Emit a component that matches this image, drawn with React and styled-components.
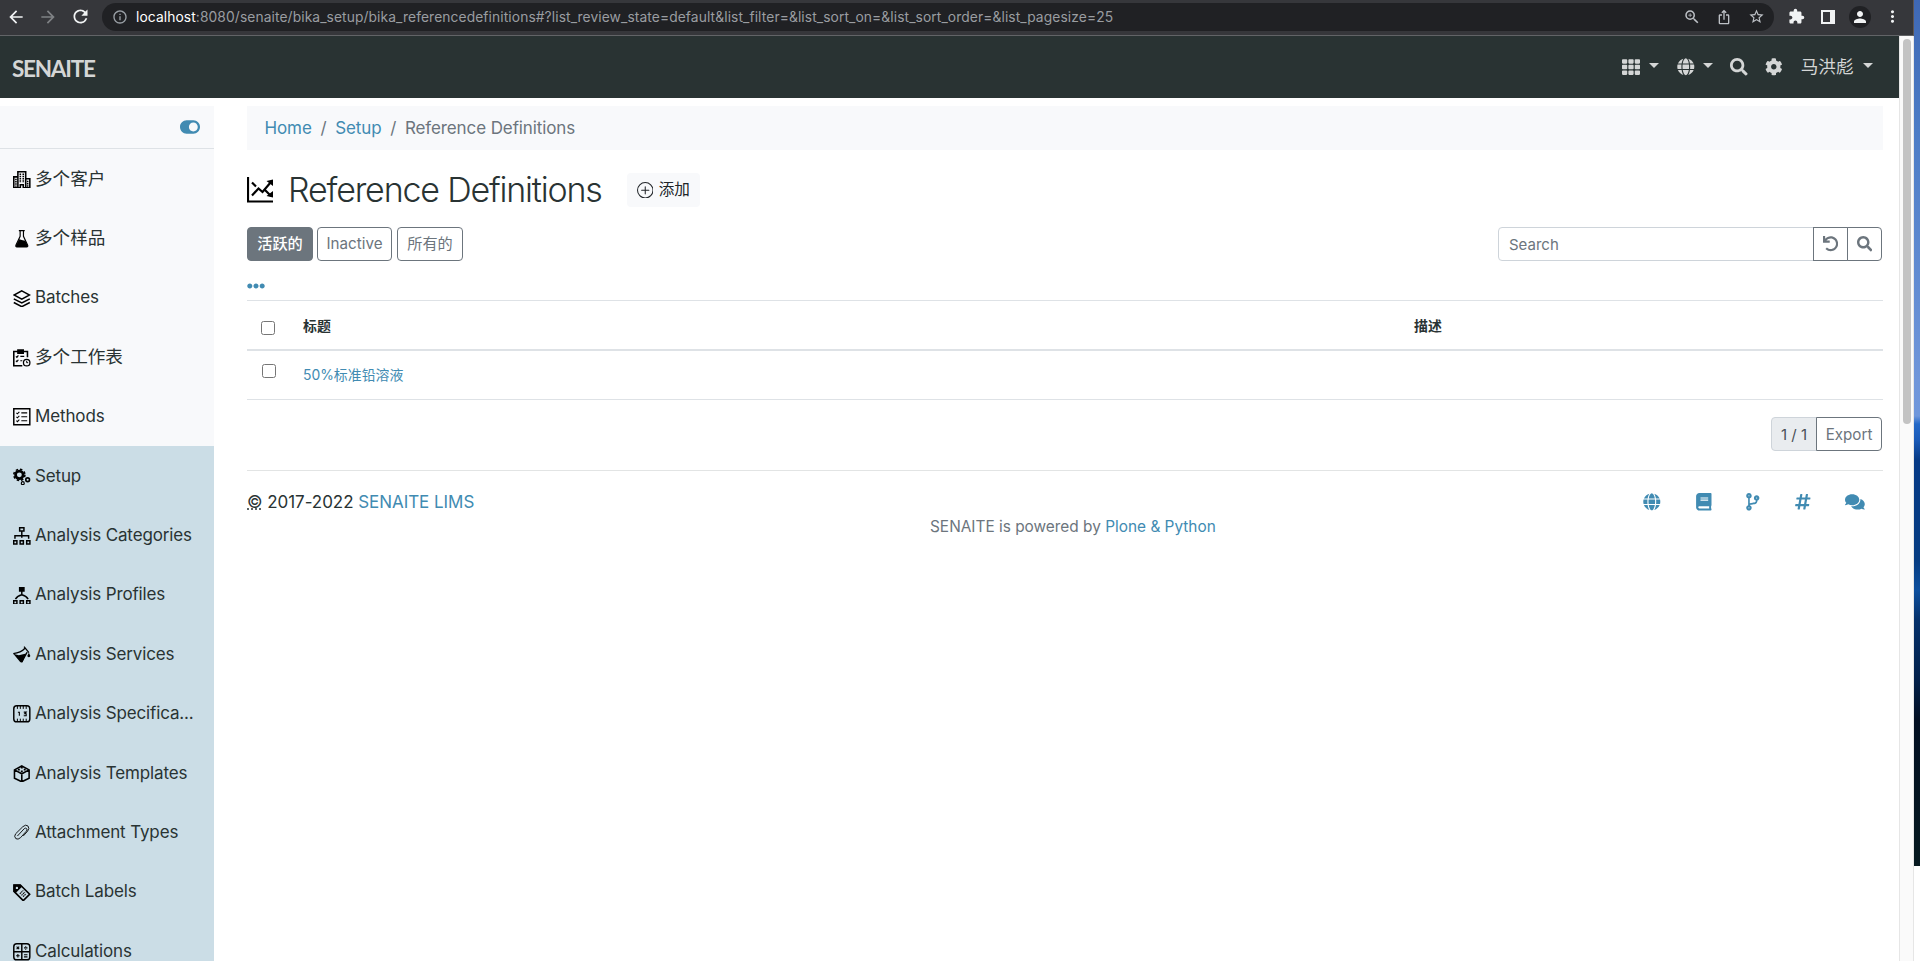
import React from 'react';
import styled, { createGlobalStyle } from 'styled-components';
import {
  FaTh, FaGlobe, FaSearch, FaCog, FaToggleOn, FaUndo, FaBook,
  FaCodeBranch, FaHashtag, FaComments, FaEllipsisH,
} from 'react-icons/fa';
import {
  MdArrowBack, MdArrowForward, MdRefresh, MdInfoOutline, MdZoomIn, MdIosShare,
  MdStarBorder, MdExtension, MdPerson, MdMoreVert,
} from 'react-icons/md';
import { BsPlusCircle } from 'react-icons/bs';

const GlobalStyle = createGlobalStyle`
  * {
    box-sizing: border-box;
  }

  body {
    margin: 0;
    overflow: hidden;
    background: #fff;
    color: #293333;
    font-family: Inter, "Noto Sans CJK SC", sans-serif;
    font-size: 17px;
    line-height: 26px;
  }

  svg {
    display: block;
    flex: none;
  }
`;

const Desktop = styled.div`
  display: flex;
  width: 1920px;
  height: 961px;
  overflow: hidden;
`;

const Wallpaper = styled.div`
  width: 6px;
  height: 866px;
  background: linear-gradient(
    #3f68b4 0, #4c7cc6 130px, #7096da 380px, #6f97dc 416px, #2469c8 424px,
    #1a5ab8 440px, #063a86 460px, #063c82 560px, #0d4f9e 590px, #05316b 620px,
    #02204a 680px, #020f22 720px, #071a20 866px
  );
`;

const Browser = styled.div`
  display: flex;
  flex-direction: column;
  width: 1914px;
  border-right: 1px solid #e6e6e6;
`;

const BrowserBar = styled.div`
  display: flex;
  align-items: center;
  flex: none;
  width: 1914px;
  height: 36px;
  padding: 0 5px 2px 7px;
  color: #f1f3f4;
  background: #36373b;
  border-bottom: 1px solid #626467;
  border-right: 1px solid #5d5653;
`;

const BarIcon = styled.div`
  display: flex;
  align-items: center;
  justify-content: center;
  flex: none;
  width: ${(props) => props.$width || 32}px;
  color: ${(props) => props.$color || 'inherit'};
`;

const AddressBar = styled.div`
  display: flex;
  align-items: center;
  flex: 1;
  height: 28px;
  margin: 0 6px 0 6px;
  padding: 0 2px 0 10px;
  border-radius: 14px;
  background: #202124;
`;

const Address = styled.div`
  flex: 1;
  padding-left: 8px;
  font-size: 13.8px;
  line-height: 20px;
  letter-spacing: 0.1px;
  white-space: nowrap;
  color: #9a9da1;

  b {
    font-weight: 400;
    color: #fff;
  }
`;

const Profile = styled.div`
  display: flex;
  align-items: center;
  justify-content: center;
  width: 22px;
  height: 22px;
  border-radius: 50%;
  background: #202124;
`;

const Viewport = styled.div`
  display: flex;
  flex: 1;
  min-height: 0;
`;

const Page = styled.div`
  width: 1899px;
`;

const Scrollbar = styled.div`
  width: 14px;
  padding: 3px 2px 0 3px;
  background: #fafafa;
  border-left: 1px solid #e6e6e6;
`;

const Thumb = styled.div`
  width: 8px;
  height: 385px;
  border-radius: 4px;
  background: #c3c3c3;
`;

const Navbar = styled.header`
  display: flex;
  align-items: center;
  height: 62px;
  padding: 0 25px 0 12px;
  background: #293333;
  color: #d4d6d6;
`;

const Logo = styled.div`
  margin-right: auto;
  padding-top: 4px;
  font-family: Lato, sans-serif;
  font-weight: 700;
  font-size: 22.5px;
  letter-spacing: -1.25px;
`;

const NavItem = styled.div`
  display: flex;
  align-items: center;
  margin-left: ${(props) => props.$gap}px;
  font-size: 17.6px;
`;

const Caret = styled.span`
  margin: 0 1px 3px ${(props) => props.$gap || 8.5}px;
  border: 5.5px solid transparent;
  border-top-color: currentColor;
  border-bottom: 0;
`;

const Body = styled.div`
  display: flex;
  height: 863px;
  padding-top: 8px;
`;

const Sidebar = styled.nav`
  flex: none;
  width: 214px;
  overflow: hidden;
  background: #f8f9fb;
`;

const SidebarToggle = styled.div`
  display: flex;
  justify-content: flex-end;
  height: 43px;
  padding: 10.5px 14px 0 0;
  border-bottom: 1px solid #dee2e6;
  color: #418bb2;
`;

const SidebarItem = styled.div`
  display: flex;
  align-items: center;
  height: 59.4px;
  padding-left: 13px;
  background: ${(props) => (props.$active ? '#cbdde6' : 'transparent')};

  svg {
    margin: 2px 4.4px 0 0;
  }
`;

const SidebarLabel = styled.span`
  font-size: ${(props) => (props.$cjk ? 17.6 : 17)}px;
  letter-spacing: ${(props) => (props.$cjk ? '0' : '-0.008em')};
  white-space: nowrap;
`;

const Content = styled.main`
  width: 1636px;
  margin-left: 33px;
`;

const Breadcrumb = styled.div`
  display: flex;
  height: 44px;
  padding: 9px 17.5px;
  color: #6c757d;
  background: #f8f9fb;
  letter-spacing: -0.006em;
  white-space: pre;
`;

const Link = styled.span`
  color: #418bb2;
`;

const Slash = styled.span`
  padding: 0 8.7px;
`;

const TitleRow = styled.div`
  display: flex;
  align-items: center;
  height: 42px;
  margin-top: 19px;
`;

const Title = styled.h1`
  margin: 0 25px 0 15px;
  font-size: 34px;
  font-weight: 300;
  line-height: 42px;
  letter-spacing: -0.035em;
  white-space: nowrap;
`;

const AddButton = styled.div`
  display: flex;
  align-items: center;
  gap: 5.5px;
  height: 34px;
  padding: 0 10px;
  border-radius: 4px;
  background: #f8f9fb;
  color: #212529;
  font-size: 15.6px;
`;

const Toolbar = styled.div`
  display: flex;
  margin-top: 16px;
  padding-right: 1px;
  height: 34px;
`;

const Button = styled.div`
  display: flex;
  align-items: center;
  justify-content: center;
  width: ${(props) => props.$width}px;
  height: 34px;
  margin-right: ${(props) => props.$gap || 0}px;
  margin-left: ${(props) => (props.$joined ? -1 : 0)}px;
  padding-top: ${(props) => props.$drop || 0}px;
  border: 1px solid #6c757d;
  border-radius: ${(props) => props.$radius || '4px'};
  background: ${(props) => (props.$active ? '#6c757d' : '#fff')};
  color: ${(props) => (props.$active ? '#fff' : '#6c757d')};
  font-size: 15.2px;
  font-weight: ${(props) => (props.$active ? 500 : 400)};
  line-height: 30px;
`;

const SearchInput = styled.input`
  width: 316px;
  height: 34px;
  margin-left: auto;
  padding: 0 10px;
  border: 1px solid #ced4da;
  border-radius: 4px 0 0 4px;
  font: 400 15px Inter, sans-serif;
  outline: none;

  &::placeholder {
    color: #6c757d;
  }
`;

const ColumnToggle = styled.div`
  height: 39px;
  padding-top: 16px;
  color: #418bb2;
`;

const Table = styled.table`
  width: 100%;
  table-layout: fixed;
  border-collapse: collapse;
  font-size: 13.9px;
  line-height: 20px;
`;

const Cell = styled.td`
  height: ${(props) => (props.$head ? 49 : 50)}px;
  padding: ${(props) => (props.$check ? '0 0 0 14px' : props.$head ? '2px 0 0' : '0')};
  border-top: 1px solid #dee2e6;
  border-bottom: ${(props) => (props.$head ? 2 : 1)}px solid #dee2e6;
  text-align: left;
  font-weight: ${(props) => (props.$head ? 700 : 400)};
`;

const Checkbox = styled.input`
  display: block;
  width: 14px;
  height: 14px;
  margin: ${(props) => props.$margin};
`;

const Pager = styled.div`
  display: flex;
  justify-content: flex-end;
  margin-top: 17px;
  padding-right: 1px;
`;

const PageCount = styled.div`
  width: 46px;
  height: 34px;
  border: 1px solid #ced4da;
  border-radius: 4px 0 0 4px;
  background: #e9ecef;
  color: #495057;
  font-size: 15px;
  line-height: 34px;
  text-align: center;
`;

const Footer = styled.footer`
  margin-top: 19px;
  padding-top: 18px;
  border-top: 1px solid #e2e4e4;
`;

const FooterRow = styled.div`
  display: flex;
  align-items: center;
  justify-content: space-between;
`;

const Copyright = styled.div`
  letter-spacing: -0.003em;

  abbr {
    text-decoration: underline dotted;
  }
`;

const FooterIcons = styled.div`
  display: flex;
  align-items: center;
  gap: 35.2px;
  padding-right: 18px;
  color: #418bb2;
`;

const FooterIcon = styled.div`
  display: flex;
  justify-content: center;
  width: ${(props) => props.$width}px;
`;

const Powered = styled.div`
  padding-left: 683px;
  margin-top: -1px;
  font-size: 15.4px;
  color: #6c757d;
`;

const Svg = ({ children }) => (
  <svg width="17.6" height="17.6" viewBox="0 0 18 18" fill="none" stroke="#000" strokeWidth="1.5">
    {children}
  </svg>
);

const icons = {
  clients: (
    <Svg>
      <path d="M.8 17.3V6H5M17.2 17.3V8H13M5 17.3V.8h8v16.500M0 17.200h7.500M10.500 17.200H18M7.500 17.500v-3.500h3v3.500" strokeWidth="1.600" />
      <path d="M7.500 2.500v9.500M10.500 2.500v9.500M3 8v8M15 10v6" strokeWidth="1.600" strokeDasharray="1.500 .8" />
    </Svg>
  ),
  samples: (
    <Svg>
      <path d="M6 .7h6M7.300 1v5.500L3 15.500q-.5 1.800 1 1.800h10q1.500 0 1-1.800L10.700 6.500V1" strokeWidth="1.200" />
      <path d="M6.300 9.500L3 16q0 1.500 1 1.500h10q1.500-.3 1-1.800l-2.500-4.700-2.500-.5z" fill="#000" stroke="none" />
    </Svg>
  ),
  batches: (
    <Svg>
      <path d="M9 .8l8 4.300-8 4.300-8-4.300zM.8 9L9 13.300 17.200 9M.8 12.800L9 17.100l8.200-4.300" />
    </Svg>
  ),
  worksheets: (
    <Svg>
      <path d="M9.500 17.200H.8V2.500h14v6" strokeWidth="1.600" />
      <path d="M5 1h5.500v3.300H5z" fill="#000" />
      <path d="M3 7.500l1 1 1.500-2M7.500 7.500h4M3 12l1 1 1.500-2M7.500 12h2" strokeWidth="1.200" />
      <circle cx="14" cy="14" r="3.300" strokeWidth="1.300" />
      <path d="M14 12v2h1.500" strokeWidth="1" />
    </Svg>
  ),
  methods: (
    <Svg>
      <path d="M.8.8h16.400v16.400H.8z" />
      <path d="M3.500 5l1 1 2-2M3.500 9l1 1 2-2M3.500 13l1 1 2-2M8.500 5h6M8.500 9h6M8.500 13h6" strokeWidth="1.100" />
    </Svg>
  ),
  setup: (
    <Svg>
      <circle cx="6.500" cy="7" r="3.900" strokeWidth="2.800" />
      <circle cx="6.500" cy="7" r="5.700" strokeWidth="1.600" strokeDasharray="2.500 1.976" />
      <circle cx="15" cy="12" r="1.900" strokeWidth="1.700" />
      <circle cx="10" cy="15.500" r="1.500" strokeWidth="1.200" />
    </Svg>
  ),
  categories: (
    <Svg>
      <path d="M6.800.7h4.400v3.400H6.800zM.7 14h3.300v3.300H.7zM7.300 14h3.300v3.300H7.300zM14 14h3.300v3.300H14z" />
      <path d="M9 4v7M2 12V9h14v3" />
    </Svg>
  ),
  profiles: (
    <Svg>
      <path d="M.7 14h3.300v3.300H.7zM7.300 14h3.300v3.300H7.300zM14 14h3.300v3.300H14z" />
      <path d="M6.800.7h4.400v3.400H6.800z" fill="#000" />
      <path d="M9 4v4M2.500 12.300Q4.500 9 9 8q4.500 1 6.500 4.300" />
    </Svg>
  ),
  services: (
    <Svg>
      <path d="M.3 7.700Q8 7 12.300 2.300M9 16.300l5.500-10M11.300.6l5 6.200" strokeWidth="1.300" />
      <path d="M.3 8L6 9.500l7.500-1.700-3.800 8.700q-1.500 1-2.600-.3z" fill="#000" stroke="none" />
      <path d="M16.200 7l-1.600 3.300q1.600 2.500 3.200 0z" fill="#000" stroke="none" />
    </Svg>
  ),
  specs: (
    <Svg>
      <rect x=".8" y=".8" width="16.400" height="16.400" rx="3" />
      <path d="M4.500 1v3M7.500 1v3M10.500 1v3M13.500 1v3M4.500 17v-3M7.500 17v-3M10.500 17v-3M13.500 17v-3" strokeWidth="1" />
      <path d="M5 7.500h1.500V11M11 7.300h2.500L12 9h1.500v2H11" strokeWidth="1.100" />
    </Svg>
  ),
  templates: (
    <Svg>
      <path d="M9 1l7.500 4v8.500L9 17.200l-7.500-3.700V5zM1.500 5L9 9l7.500-4M9 9v8" strokeWidth="1.600" />
      <path d="M5 4.700h2M11 4.700h2M8 2.900h2M8 6.500h2" strokeWidth="1.600" />
    </Svg>
  ),
  attachments: (
    <Svg>
      <path d="M4.500 12.500L11.500 5q1.600-1.200 2.500 0t-.3 2.500l-6 6.700q-2.600 2.400-4.800 1-2.300-2.300-.2-5L10 3q3-2.800 5.300-.8 2 2.500-.3 5.300l-4.500 5" strokeWidth=".9" transform="translate(0 -.2)" />
    </Svg>
  ),
  labels: (
    <Svg>
      <path d="M1 1h6.500l9.500 9.500-6.500 6.500L1 7.500z" strokeWidth="1.700" />
      <path d="M.5.500h7l2 2-7 7-2-2z" fill="#000" stroke="none" />
      <circle cx="4" cy="4" r="1.200" fill="#cbdde6" stroke="none" />
      <path d="M7 10l3.500-3.500M8.700 11.700l3.500-3.500M10.300 13l3-3" strokeWidth="1.100" strokeDasharray="1.500 .6" />
    </Svg>
  ),
  calculations: (
    <Svg>
      <rect x=".8" y=".8" width="16.400" height="16.400" rx="3" />
      <path d="M9 1v16M1 9h16" />
      <path d="M3.700 3.700l2.600 2.600M6.300 3.700L3.700 6.300M11.300 5h3.500M13 3v.9M13 6.100V7M3.200 13h3.600M5 11.200v3.600M11.300 12h3.500M11.300 14.200h3.500" strokeWidth="1.100" />
    </Svg>
  ),
};

const items = [
  { icon: 'clients', label: '多个客户', cjk: true },
  { icon: 'samples', label: '多个样品', cjk: true },
  { icon: 'batches', label: 'Batches' },
  { icon: 'worksheets', label: '多个工作表', cjk: true },
  { icon: 'methods', label: 'Methods' },
  { icon: 'setup', label: 'Setup', active: true },
  { icon: 'categories', label: 'Analysis Categories', active: true },
  { icon: 'profiles', label: 'Analysis Profiles', active: true },
  { icon: 'services', label: 'Analysis Services', active: true },
  { icon: 'specs', label: 'Analysis Specifica...', active: true },
  { icon: 'templates', label: 'Analysis Templates', active: true },
  { icon: 'attachments', label: 'Attachment Types', active: true },
  { icon: 'labels', label: 'Batch Labels', active: true },
  { icon: 'calculations', label: 'Calculations', active: true },
];

const ReferenceIcon = () => (
  <svg width="26" height="26" viewBox="0 0 26 26" fill="none" stroke="#000">
    <path d="M1 0v24.500h25" strokeWidth="2.200" />
    <path d="M5 18.500l6.500-7 4 3.500L24 5M5 5.500l4 4M18 13l6 6" strokeWidth="2.200" />
    <path d="M26 2.500v6.500L19.500 4zM26 20.500v-6.500L19.500 19z" fill="#000" stroke="none" />
  </svg>
);

const App = () => (
  <Desktop>
    <GlobalStyle />
    <Browser>
      <BrowserBar>
        <BarIcon $width={18}><MdArrowBack size={20} /></BarIcon>
        <BarIcon $width={46} $color="#7f8285"><MdArrowForward size={20} /></BarIcon>
        <BarIcon $width={18}><MdRefresh size={21} /></BarIcon>
        <BarIcon $width={7} />
        <AddressBar>
          <MdInfoOutline size={16} color="#9aa0a6" />
          <Address>
            <b>localhost</b>:8080/senaite/bika_setup/bika_referencedefinitions#?list_review_state=default&amp;list_filter=&amp;list_sort_on=&amp;list_sort_order=&amp;list_pagesize=25
          </Address>
          <BarIcon $color="#bdc1c6"><MdZoomIn size={18} /></BarIcon>
          <BarIcon $color="#bdc1c6"><MdIosShare size={16} /></BarIcon>
          <BarIcon $color="#bdc1c6"><MdStarBorder size={17} /></BarIcon>
        </AddressBar>
        <BarIcon><MdExtension size={17} /></BarIcon>
        <BarIcon>
          <svg width="14" height="14" viewBox="0 0 14 14">
            <path fill="currentColor" d="M0 0h14v14H0zM2 2v10h7V2z" fillRule="evenodd" />
          </svg>
        </BarIcon>
        <BarIcon><Profile><MdPerson size={18} /></Profile></BarIcon>
        <BarIcon><MdMoreVert size={19} /></BarIcon>
      </BrowserBar>
      <Viewport>
        <Page>
          <Navbar>
            <Logo>SENAITE</Logo>
            <NavItem><FaTh size={18} /><Caret /></NavItem>
            <NavItem $gap={17}><FaGlobe size={17.6} /><Caret /></NavItem>
            <NavItem $gap={16}><FaSearch size={17.6} /></NavItem>
            <NavItem $gap={17.5}><FaCog size={17.6} /></NavItem>
            <NavItem $gap={18}>马洪彪<Caret $gap={9.5} /></NavItem>
          </Navbar>
          <Body>
            <Sidebar>
              <SidebarToggle><FaToggleOn size={20} /></SidebarToggle>
              {items.map((item) => (
                <SidebarItem key={item.label} $active={item.active}>
                  {icons[item.icon]}
                  <SidebarLabel $cjk={item.cjk}>{item.label}</SidebarLabel>
                </SidebarItem>
              ))}
            </Sidebar>
            <Content>
              <Breadcrumb>
                <Link>Home</Link>
                <Slash>/</Slash>
                <Link>Setup</Link>
                <Slash>/</Slash>
                <span>Reference Definitions</span>
              </Breadcrumb>
              <TitleRow>
                <ReferenceIcon />
                <Title>Reference Definitions</Title>
                <AddButton><BsPlusCircle size={16.5} />添加</AddButton>
              </TitleRow>
              <Toolbar>
                <Button $width={66} $gap={4} $active>活跃的</Button>
                <Button $width={75} $gap={5}>Inactive</Button>
                <Button $width={66}>所有的</Button>
                <SearchInput placeholder="Search" />
                <Button $width={35} $radius="0" $joined><FaUndo size={15.4} /></Button>
                <Button $width={35} $radius="0 4px 4px 0" $joined><FaSearch size={15.4} /></Button>
              </Toolbar>
              <ColumnToggle><FaEllipsisH size={18} /></ColumnToggle>
              <Table>
                <colgroup>
                  <col style={{ width: 56 }} />
                  <col style={{ width: 1111 }} />
                  <col />
                </colgroup>
                <thead>
                  <tr>
                    <Cell as="th" $head $check><Checkbox type="checkbox" $margin="7px 0 0" /></Cell>
                    <Cell as="th" $head>标题</Cell>
                    <Cell as="th" $head>描述</Cell>
                  </tr>
                </thead>
                <tbody>
                  <tr>
                    <Cell $check><Checkbox type="checkbox" $margin="0 0 8px 1px" /></Cell>
                    <Cell><Link>50%标准铅溶液</Link></Cell>
                    <Cell />
                  </tr>
                </tbody>
              </Table>
              <Pager>
                <PageCount>1 / 1</PageCount>
                <Button $width={66} $radius="0 4px 4px 0" $drop={2} $joined>Export</Button>
              </Pager>
              <Footer>
                <FooterRow>
                  <Copyright><abbr>©</abbr> 2017-2022 <Link>SENAITE LIMS</Link></Copyright>
                  <FooterIcons>
                    <FooterIcon $width={17}><FaGlobe size={17.6} /></FooterIcon>
                    <FooterIcon $width={15.4}><FaBook size={17.6} /></FooterIcon>
                    <FooterIcon $width={13.2}><FaCodeBranch size={17.6} /></FooterIcon>
                    <FooterIcon $width={15.4}><FaHashtag size={17.6} /></FooterIcon>
                    <FooterIcon $width={19.8}><FaComments size={19.8} /></FooterIcon>
                  </FooterIcons>
                </FooterRow>
                <Powered>SENAITE is powered by <Link>Plone &amp; Python</Link></Powered>
              </Footer>
            </Content>
          </Body>
        </Page>
        <Scrollbar><Thumb /></Scrollbar>
      </Viewport>
    </Browser>
    <Wallpaper />
  </Desktop>
);

export default App;
